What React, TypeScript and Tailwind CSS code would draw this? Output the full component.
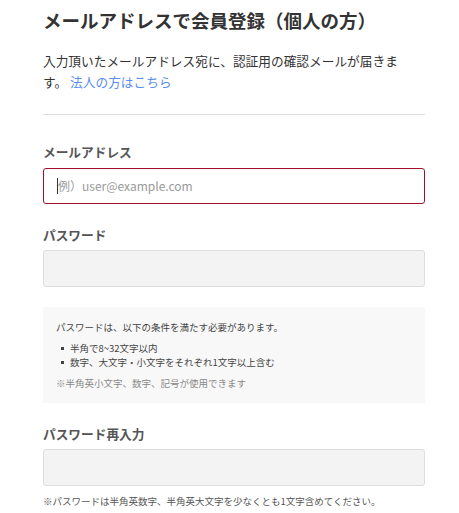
import React from "react";

const font = { fontFamily: '"Noto Sans CJK JP", "Noto Sans", sans-serif' };

export default function App() {
  return (
    <div className="min-h-[513px] w-[459px] bg-white" style={font}>
      <div className="ml-[43px] w-[382px]">
        <h1 className="pt-[6px] text-[18.5px] leading-[28px] font-bold text-[#333]">
          メールアドレスで会員登録（個人の方）
        </h1>
        <p className="mt-[16px] w-[368px] text-[12.7px] leading-[21px] text-[#333]">
          入力頂いたメールアドレス宛に、認証用の確認メールが届きます。
          <a className="ml-[3px] text-[#5b8def]">法人の方はこちら</a>
        </p>
        <div className="mt-[22px] border-t border-[#dddddd]" />

        <div className="mt-[27px] text-[12.7px] leading-[20px] font-bold text-[#555]">メールアドレス</div>
        <div className="mt-[6px] flex h-[36px] items-center rounded-[3px] border border-[#a0122b] px-[13px]">
          <span className="h-[16px] w-px bg-[#333]" />
          <span className="text-[12px] text-[#9a9a9a]">例）user@example.com</span>
        </div>

        <div className="mt-[21px] text-[12.7px] leading-[20px] font-bold text-[#555]">パスワード</div>
        <div className="mt-[5px] h-[37px] rounded-[3px] border border-[#dedede] bg-[#f3f3f3]" />

        <div className="mt-[20px] bg-[#f8f8f8] px-[13px] pt-[13px] pb-[13px] text-[9.5px] leading-[14px] text-[#444]">
          <p>パスワードは、以下の条件を満たす必要があります。</p>
          <ul className="mt-[7px]">
            <li className="flex items-center">
              <span className="ml-[5px] mr-[6px] h-[3px] w-[3px] bg-[#444]" />
              半角で8~32文字以内
            </li>
            <li className="flex items-center">
              <span className="ml-[5px] mr-[6px] h-[3px] w-[3px] bg-[#444]" />
              数字、大文字・小文字をそれぞれ1文字以上含む
            </li>
          </ul>
          <p className="mt-[7px] text-[#888]">※半角英小文字、数字、記号が使用できます</p>
        </div>

        <div className="mt-[21px] text-[12.7px] leading-[20px] font-bold text-[#555]">パスワード再入力</div>
        <div className="mt-[5px] h-[37px] rounded-[3px] border border-[#dedede] bg-[#f3f3f3]" />
        <p className="mt-[8px] text-[9.5px] leading-[14px] text-[#555]">
          ※パスワードは半角英数字、半角英大文字を少なくとも1文字含めてください。
        </p>
      </div>
    </div>
  );
}
